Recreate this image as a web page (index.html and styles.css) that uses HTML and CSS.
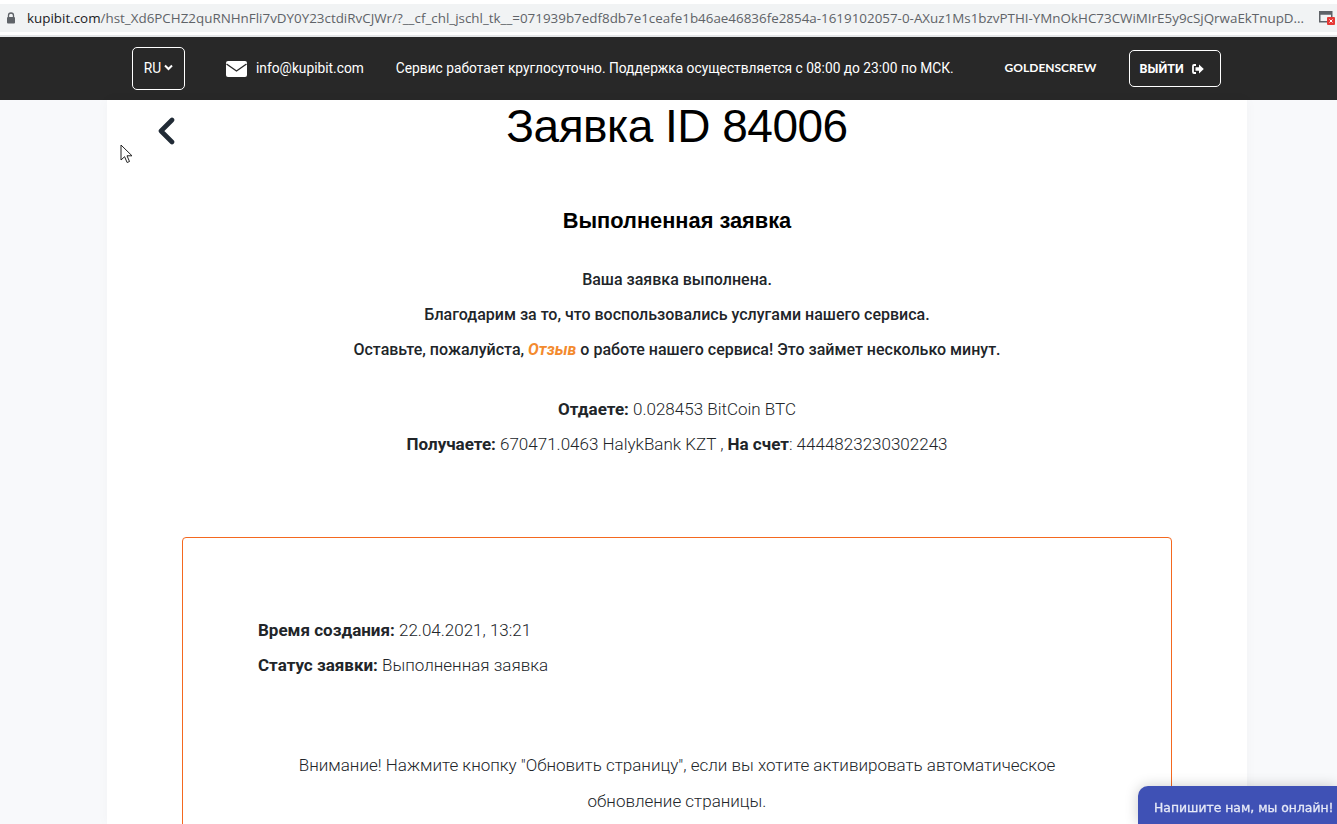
FILE: index.html
```html
<!DOCTYPE html>
<html lang="ru">
<head>
    <meta charset="UTF-8">
    <meta name="viewport" content="width=device-width, initial-scale=1.0">
    <title>Заявка ID 84006</title>
    <link rel="stylesheet" href="styles.css">
</head>
<body>
    <div class="browser-bar">
        <div class="url-pill">
            <svg class="lock" width="10" height="12" viewBox="0 0 10 12"><path d="M2.5 5V3.5a2.5 2.5 0 0 1 5 0V5" fill="none" stroke="#5f6368" stroke-width="1.3"/><rect x="1" y="5" width="8" height="6.5" rx="1" fill="#5f6368"/></svg>
            <span class="url"><span class="url-host">kupibit.com</span>/hst_Xd6PCHZ2quRNHnFli7vDY0Y23ctdiRvCJWr/?__cf_chl_jschl_tk__=071939b7edf8db7e1ceafe1b46ae46836fe2854a-1619102057-0-AXuz1Ms1bzvPTHI-YMnOkHC73CWiMIrE5y9cSjQrwaEkTnupD...</span>
            <svg class="tab-icon" width="16" height="14" viewBox="0 0 16 14"><rect x="0.75" y="0.75" width="12" height="10" fill="none" stroke="#5f6368" stroke-width="1.5"/><rect x="0.75" y="0.75" width="12" height="3" fill="#5f6368"/><rect x="8" y="6" width="8" height="8" rx="1" fill="#e53935"/><path d="M10.5 8.5l3 3m0-3l-3 3" stroke="#fff" stroke-width="1"/></svg>
        </div>
    </div>

    <header class="topbar">
        <div class="lang">RU
            <svg width="9" height="7" viewBox="0 0 9 7"><path d="M1 1.5l3.5 3.5L8 1.5" fill="none" stroke="#fff" stroke-width="2"/></svg>
        </div>
        <svg class="mail-icon" width="21" height="16" viewBox="0 0 21 16"><rect width="21" height="16" rx="2" fill="#fff"/><path d="M0.5 3l10 7 10-7" fill="none" stroke="#282828" stroke-width="1.4"/></svg>
        <span class="mail">info@kupibit.com</span>
        <span class="notice">Сервис работает круглосуточно. Поддержка осуществляется с 08:00 до 23:00 по МСК.</span>
        <span class="username">GOLDENSCREW</span>
        <div class="logout">ВЫЙТИ
            <svg width="12" height="10" viewBox="0 0 12 10"><path d="M4 1H2a1 1 0 0 0-1 1v6a1 1 0 0 0 1 1h2" fill="none" stroke="#fff" stroke-width="1.8"/><path d="M3.5 3.2H7V0.6L11.8 5 7 9.4V6.8H3.5z" fill="#fff"/></svg>
        </div>
    </header>

    <main class="page">
        <div class="title-row">
            <svg class="back" width="18" height="28" viewBox="0 0 18 28"><path d="M15 3L4 14l11 11" fill="none" stroke="#212b36" stroke-width="4.6" stroke-linecap="round" stroke-linejoin="round"/></svg>
            <h1>Заявка ID 84006</h1>
        </div>

        <h2>Выполненная заявка</h2>
        <p class="line strong">Ваша заявка выполнена.</p>
        <p class="line strong">Благодарим за то, что воспользовались услугами нашего сервиса.</p>
        <p class="line strong">Оставьте, пожалуйста, <a class="review" href="#">Отзыв</a> о работе нашего сервиса! Это займет несколько минут.</p>

        <div class="summary">
            <p class="line"><b>Отдаете:</b> 0.028453 BitCoin BTC</p>
            <p class="line"><b>Получаете:</b> 670471.0463 HalykBank KZT , <b>На счет</b>: 4444823230302243</p>
        </div>

        <section class="order-box">
            <p class="line left"><b>Время создания:</b> 22.04.2021, 13:21</p>
            <p class="line left"><b>Статус заявки:</b> Выполненная заявка</p>
            <p class="warning">Внимание! Нажмите кнопку "Обновить страницу", если вы хотите активировать автоматическое обновление страницы.</p>
        </section>
    </main>

    <div class="chat">Напишите нам, мы онлайн!</div>

    <svg class="cursor" width="14" height="20" viewBox="0 0 14 20"><path d="M1 1v15l3.6-3.3 2.5 5.8 2.4-1-2.5-5.7H12z" fill="#fff" stroke="#222" stroke-width="1"/></svg>
</body>
</html>
```

FILE: styles.css
```css
html, body {
    height: 100%;
}
body {
    margin: 0;
    height: 824px;
    overflow: hidden;
    background-color: #f8f9fb;
    font-family: Roboto, "Liberation Sans", sans-serif;
    font-size: 17px;
    color: #212529;
}

/* Browser address bar */
.browser-bar {
    height: 37px;
    padding-top: 4px;
    box-sizing: border-box;
    background-color: #fff;
    border-bottom: 2px solid #e4e6e8;
}
.url-pill {
    display: flex;
    align-items: center;
    height: 28px;
    padding-left: 6px;
    background-color: #f1f3f4;
    overflow: hidden;
    white-space: nowrap;
}
.lock {
    flex-shrink: 0;
    margin-right: 11px;
}
.url {
    flex: 1;
    font-family: "Open Sans", "Liberation Sans", sans-serif;
    font-size: 13.4px;
    color: #5f6368;
}
.url-host {
    color: #202124;
}
.tab-icon {
    flex-shrink: 0;
    margin-right: 2px;
}

/* Dark site header */
.topbar {
    display: flex;
    align-items: center;
    height: 63px;
    padding-left: 132px;
    background-color: #282828;
    color: #fff;
    font-size: 13.75px;
}
.lang {
    display: flex;
    align-items: center;
    justify-content: center;
    gap: 3px;
    width: 53px;
    height: 43px;
    padding-bottom: 2px;
    box-sizing: border-box;
    border: 1px solid #fff;
    border-radius: 5px;
}
.mail-icon {
    margin-left: 41px;
}
.mail {
    margin-left: 9px;
    padding-bottom: 2px;
}
.notice {
    margin-left: 32px;
    padding-bottom: 2px;
}
.username {
    margin-left: 51px;
    width: 91px;
    padding-bottom: 2px;
    font-family: Lato, "Liberation Sans", sans-serif;
    font-size: 12px;
    font-weight: 700;
}
.logout {
    display: flex;
    align-items: center;
    gap: 8px;
    width: 92px;
    height: 37px;
    margin-left: 33px;
    padding-left: 10px;
    box-sizing: border-box;
    border: 1px solid #fff;
    border-radius: 5px;
    font-size: 12.5px;
    font-weight: 700;
}

/* Page content */
.page {
    width: 1140px;
    margin-left: 107px;
    height: 724px;
    overflow: hidden;
    background-color: #fff;
    box-shadow: 0 0 12px rgba(0, 0, 0, 0.03);
    text-align: center;
}
.title-row {
    position: relative;
    height: 54px;
}
.back {
    position: absolute;
    left: 50px;
    top: 17px;
}
h1 {
    margin: 0;
    font-family: "Liberation Sans", Arial, sans-serif;
    font-size: 46px;
    font-weight: 400;
    letter-spacing: -0.5px;
    line-height: 52px;
    color: #000;
}
h2 {
    margin: 52px 0 32px;
    font-family: "Liberation Sans", Arial, sans-serif;
    font-size: 21.8px;
    font-weight: 700;
    line-height: 30px;
    color: #000;
}
.line {
    margin: 0 0 11px;
    line-height: 24px;
    font-weight: 300;
}
.line b {
    font-weight: 700;
}
.line.strong {
    font-size: 16px;
    font-weight: 500;
}
.review {
    color: #f38a2e;
    font-weight: 700;
    font-style: italic;
    text-decoration: none;
}
.summary {
    margin-top: 35px;
}
.order-box {
    width: 990px;
    height: 400px;
    margin: 81px 0 0 75px;
    padding: 80px 75px 0;
    box-sizing: border-box;
    border: 1px solid #f4681f;
    border-radius: 4px;
}
.left {
    text-align: left;
}
.warning {
    width: 780px;
    margin: 70px auto 0;
    line-height: 36px;
    font-weight: 300;
}

/* Chat widget */
.chat {
    position: fixed;
    left: 1138px;
    top: 786px;
    width: 199px;
    height: 38px;
    padding: 14px 0 0 16px;
    box-sizing: border-box;
    background-color: #3f51b5;
    border-radius: 10px 0 0 0;
    box-shadow: 0 0 14px rgba(0, 0, 0, 0.2);
    color: #e6e9f7;
    font-family: "DejaVu Sans", sans-serif;
    font-size: 12.4px;
    -webkit-text-stroke: 0.3px #e6e9f7;
    white-space: nowrap;
    overflow: hidden;
}
.cursor {
    position: fixed;
    left: 120px;
    top: 144px;
}
```
